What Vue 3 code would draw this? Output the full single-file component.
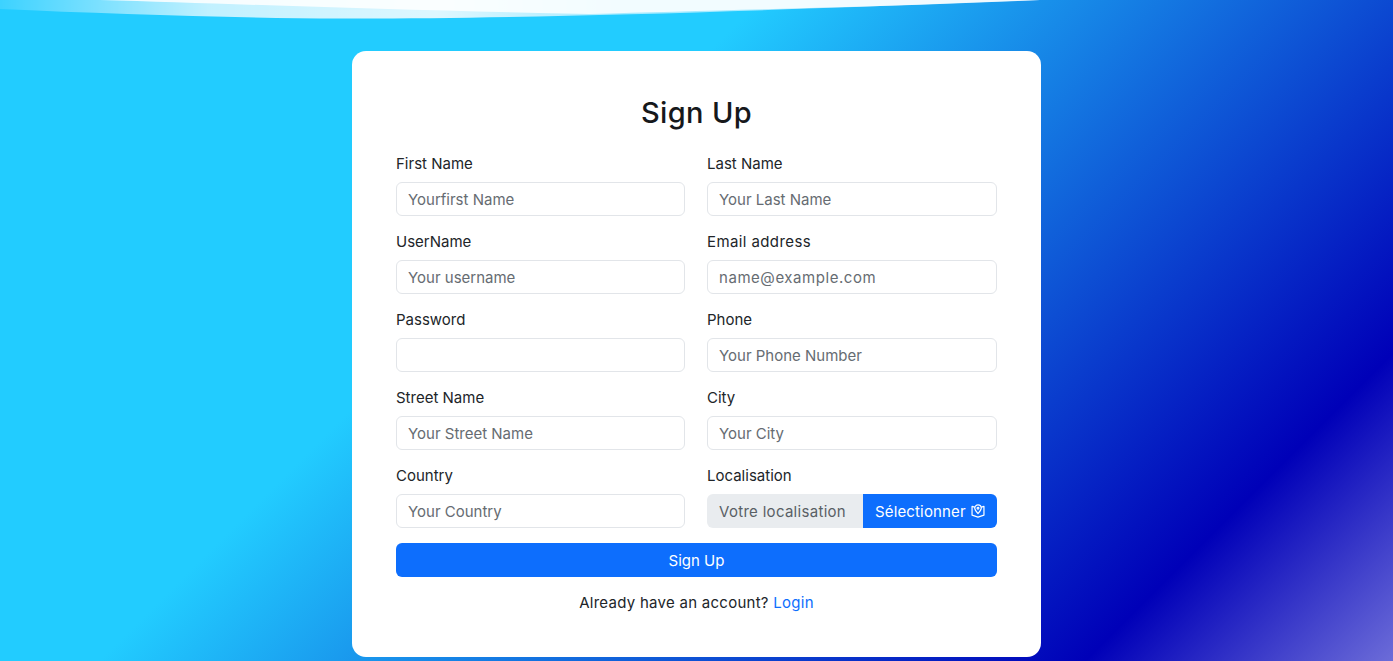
<script setup>
const rows = [
  [
    { label: 'First Name', placeholder: 'Yourfirst Name', type: 'text' },
    { label: 'Last Name', placeholder: 'Your Last Name', type: 'text' }
  ],
  [
    { label: 'UserName', placeholder: 'Your username', type: 'text' },
    { label: 'Email address', placeholder: 'name@example.com', type: 'email' }
  ],
  [
    { label: 'Password', placeholder: '', type: 'password' },
    { label: 'Phone', placeholder: 'Your Phone Number', type: 'text' }
  ],
  [
    { label: 'Street Name', placeholder: 'Your Street Name', type: 'text' },
    { label: 'City', placeholder: 'Your City', type: 'text' }
  ]
]
</script>

<template>
  <div class="page">
    <svg class="wave" viewBox="0 0 1393 24" preserveAspectRatio="none" aria-hidden="true">
      <defs>
        <linearGradient id="waveFade" x1="0" y1="0" x2="1" y2="0">
          <stop offset="0" stop-color="#ffffff" stop-opacity="0.12" />
          <stop offset="0.2" stop-color="#ffffff" stop-opacity="0.72" />
          <stop offset="0.42" stop-color="#ffffff" stop-opacity="0.85" />
          <stop offset="0.6" stop-color="#ffffff" stop-opacity="0.6" />
        </linearGradient>
      </defs>
      <path d="M0 9C110 14 240 18 340 18.500C520 19 760 11 1040 0H0Z" fill="url(#waveFade)" />
      <path d="M100 0C240 4 420 11 590 14C720 10 880 7 1040 0Z" fill="#ffffff" opacity="0.85" />
    </svg>

    <div class="card">
      <h1>Sign Up</h1>
      <form class="form" @submit.prevent>
        <div class="grid">
          <template v-for="(row, i) in rows" :key="i">
            <div class="field" :class="{ wide: f.type === 'email' }" v-for="f in row" :key="f.label">
              <label>{{ f.label }}</label>
              <input class="control" :type="f.type" :placeholder="f.placeholder" />
            </div>
          </template>
          <div class="field">
            <label>Country</label>
            <input class="control" type="text" placeholder="Your Country" />
          </div>
          <div class="field">
            <label>Localisation</label>
            <div class="group">
              <span class="addon">Votre localisation</span>
              <button class="pick" type="button">
                Sélectionner
                <svg class="pin" viewBox="0 0 16 16" fill="none" stroke="currentColor" stroke-width="1.4" stroke-linejoin="round" stroke-linecap="round">
                  <path d="M4 3.6 1.2 2.8v10L8 15l6.8-2.2v-10L12 3.6" />
                  <path d="M8 1a3.700 3.700 0 0 0-3.700 3.700C4.300 7.300 8 11 8 11s3.700-3.700 3.700-6.300A3.700 3.700 0 0 0 8 1Z" />
                  <circle cx="8" cy="4.800" r="1" />
                </svg>
              </button>
            </div>
          </div>
        </div>
        <button class="submit" type="submit">Sign Up</button>
      </form>
      <p class="login">Already have an account? <a href="#">Login</a></p>
    </div>
  </div>
</template>

<style>
html, body {
  margin: 0;
  overflow: hidden;
}
</style>

<style scoped>
.page {
  position: relative;
  height: 661px;
  box-sizing: border-box;
  padding-top: 51px;
  display: flex;
  justify-content: center;
  align-items: flex-start;
  overflow: hidden;
  font-family: "Inter", "Liberation Sans", sans-serif;
  background: linear-gradient(135deg, #22ccff 0%, #22ccff 37%, #0000b8 85%, #6c6cd8 100%);
}

.wave {
  position: absolute;
  top: 0;
  left: 0;
  width: 100%;
  height: 24px;
}

.card {
  width: 689px;
  height: 606px;
  box-sizing: border-box;
  padding: 44px 44px 0;
  background: #fff;
  border-radius: 14px;
  color: #212529;
}

h1 {
  margin: 0 0 23px;
  height: 36px;
  text-align: center;
  font-size: 29px;
  line-height: 36px;
  font-weight: 500;
  letter-spacing: 0.35px;
  color: #16181b;
}

.grid {
  display: grid;
  grid-template-columns: 289px 290px;
  column-gap: 22px;
  row-gap: 16px;
}

.field label {
  display: block;
  height: 19px;
  margin-bottom: 9px;
  font-size: 15px;
  line-height: 19px;
}

.wide label {
  letter-spacing: 0.4px;
}

.wide .control {
  letter-spacing: 0.55px;
}

.control {
  display: block;
  width: 100%;
  height: 34px;
  box-sizing: border-box;
  padding: 0 11px;
  border: 1px solid #e2e5e9;
  border-radius: 6px;
  background: #fff;
  color: #212529;
  font: inherit;
  font-size: 15px;
  outline: none;
}

.control::placeholder {
  color: #666c72;
  opacity: 1;
}

.group {
  display: flex;
  height: 34px;
}

.addon {
  display: flex;
  align-items: center;
  width: 156px;
  box-sizing: border-box;
  padding-left: 12px;
  background: #e9ecef;
  border-radius: 6px 0 0 6px;
  color: #595f65;
  font-size: 15px;
  letter-spacing: 0.3px;
}

.pick {
  flex: 1;
  display: flex;
  align-items: center;
  gap: 5px;
  padding: 0 0 0 12px;
  border: 0;
  border-radius: 0 6px 6px 0;
  background: #0d6efd;
  color: #fff;
  font: inherit;
  font-size: 15px;
  letter-spacing: 0.15px;
}

.pin {
  width: 14px;
  height: 14px;
}

.submit {
  display: block;
  width: 100%;
  height: 34px;
  margin-top: 15px;
  border: 0;
  border-radius: 6px;
  background: #0d6efd;
  color: #fff;
  font: inherit;
  font-size: 15px;
}

.login {
  margin: 16px 0 0;
  text-align: center;
  font-size: 15px;
  line-height: 19px;
  letter-spacing: 0.27px;
}

.login a {
  color: #0d6efd;
  text-decoration: none;
}
</style>
